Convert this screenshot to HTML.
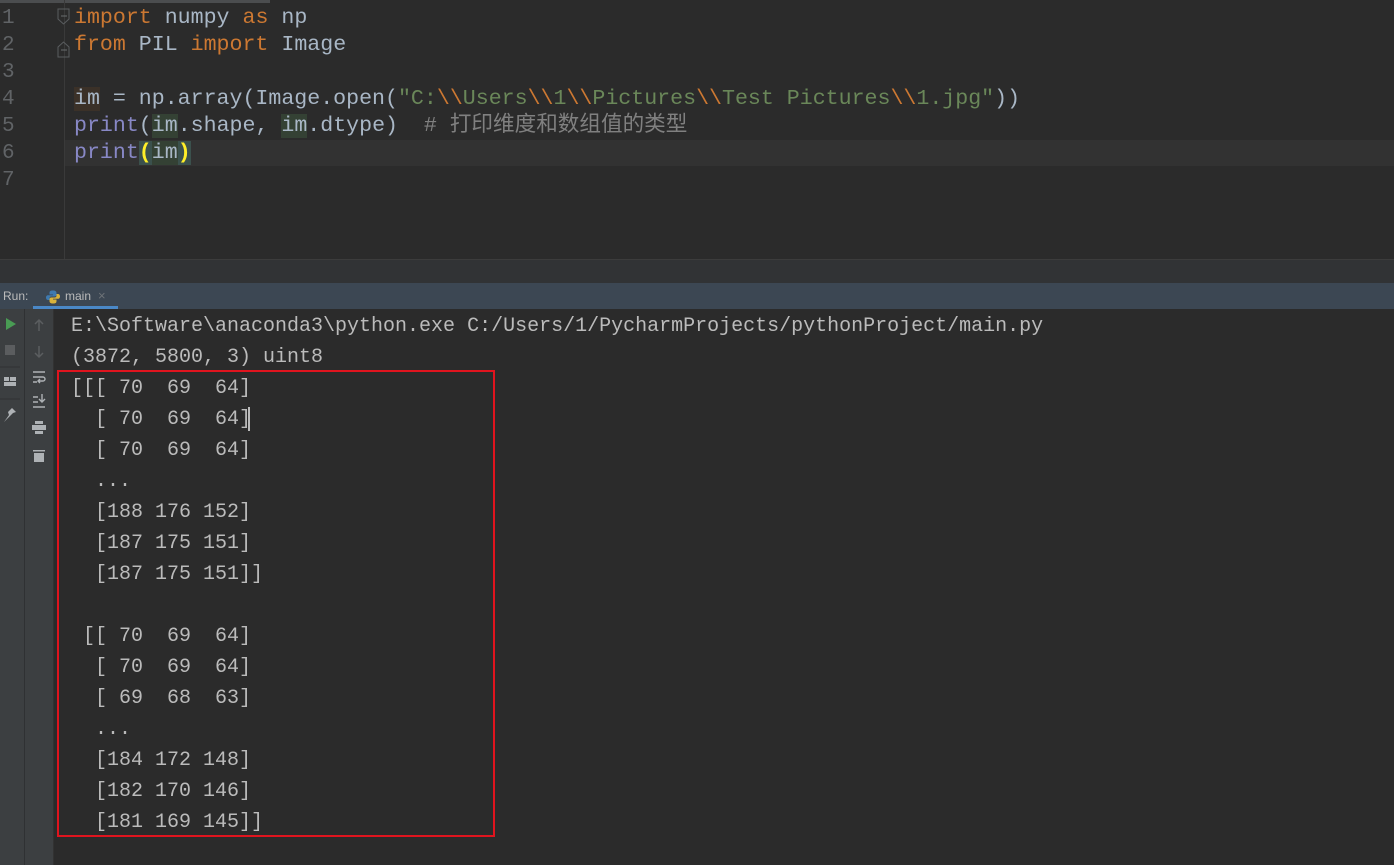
<!DOCTYPE html>
<html><head><meta charset="utf-8"><style>
body{margin:0;width:1394px;height:865px;background:#2b2b2b;overflow:hidden;position:relative;font-family:"Liberation Mono","Noto Sans CJK SC",monospace;}
.ed{position:absolute;left:0;top:0;width:1394px;height:259px;background:#2b2b2b;}
.ln{position:absolute;left:0;width:20px;text-align:left;color:#606366;font-size:21px;line-height:27px;padding-left:2px}
.code{position:absolute;left:74px;font-size:21.6px;line-height:27px;color:#a9b7c6;white-space:pre}
.k{color:#cc7832}.s{color:#6a8759}.p{color:#8888c6}.c{color:#808080}
.hl{background:#344134}
.con{position:absolute;left:71px;font-size:20px;line-height:31px;color:#bbbbbb;white-space:pre}
</style></head><body>
<div class="ed">
<div style="position:absolute;left:0;top:0;width:270px;height:3px;background:#4b4d4f"></div>
<div style="position:absolute;left:64px;top:0;width:1px;height:259px;background:#3a3a3a"></div>
<div style="position:absolute;left:65px;top:140px;width:1329px;height:26px;background:#323232"></div>
<div class="ln" style="top:5px">1</div><div class="ln" style="top:32px">2</div><div class="ln" style="top:59px">3</div><div class="ln" style="top:86px">4</div><div class="ln" style="top:113px">5</div><div class="ln" style="top:140px">6</div><div class="ln" style="top:167px">7</div>
<svg style="position:absolute;left:56px;top:8px" width="16" height="50"><path d="M2 1h11v10l-5.5 5l-5.5-5z" fill="none" stroke="#5a5d5f"/><path d="M5 8h6" stroke="#6a6d6f"/><path d="M2 49v-10l5.5-5l5.5 5v10z" fill="none" stroke="#5a5d5f"/><path d="M5 42h6" stroke="#6a6d6f"/></svg>
<div class="code" style="top:5px"><span class="k">import</span> numpy <span class="k">as</span> np</div>
<div class="code" style="top:32px"><span class="k">from</span> PIL <span class="k">import</span> Image</div>
<div class="code" style="top:86px"><span style="background:#3b3128">im</span> = np.array(Image.open(<span class="s">"C:<span class="k">\\</span>Users<span class="k">\\</span>1<span class="k">\\</span>Pictures<span class="k">\\</span>Test Pictures<span class="k">\\</span>1.jpg"</span>))</div>
<div class="code" style="top:113px"><span class="p">print</span>(<span class="hl">im</span>.shape, <span class="hl">im</span>.dtype)  <span class="c"># 打印维度和数组值的类型</span></div>
<div class="code" style="top:140px"><span class="p">print</span><span style="background:#3b514d;color:#ffef28;font-weight:bold">(</span><span class="hl">im</span><span style="background:#3b514d;color:#ffef28;font-weight:bold">)</span></div>
</div>
<div style="position:absolute;left:0;top:259px;width:1394px;height:1px;background:#3c3c3c"></div>
<div style="position:absolute;left:0;top:260px;width:1394px;height:23px;background:#313335"></div>
<div style="position:absolute;left:0;top:283px;width:1394px;height:26px;background:#3c4753"></div>
<div style="position:absolute;left:3px;top:289px;font-family:'Liberation Sans',sans-serif;font-size:12px;color:#bbbbbb">Run:</div>
<svg style="position:absolute;left:46px;top:290px" width="14" height="14"><path d="M7 0.5c-3 0-3.5 1-3.5 2.5v1.5h3.5v.7h-5C0.5 5.2 0 6.5 0 7.5s.5 2.5 2 2.5h1.5V8.3c0-1 .8-1.8 1.8-1.8h3.5c.9 0 1.7-.8 1.7-1.7V3C10.5 1.5 9.5.5 7 .5z" fill="#3e7ab0"/><path d="M7 13.5c3 0 3.5-1 3.5-2.5V9.5H7v-.7h5c1.5 0 2-1.3 2-2.3s-.5-2.5-2-2.5h-1.5v1.7c0 1-.8 1.8-1.8 1.8H5.2c-.9 0-1.7.8-1.7 1.7V11c0 1.5 1 2.5 3.5 2.5z" fill="#d9b33a"/></svg>
<div style="position:absolute;left:65px;top:289px;font-family:'Liberation Sans',sans-serif;font-size:12px;color:#bbbbbb">main</div>
<div style="position:absolute;left:98px;top:288px;font-family:'Liberation Sans',sans-serif;font-size:13px;color:#6e7378">×</div>
<div style="position:absolute;left:33px;top:306px;width:85px;height:3px;background:#4a88c7"></div>
<div style="position:absolute;left:0;top:309px;width:24px;height:556px;background:#3c3f41"></div>
<div style="position:absolute;left:24px;top:309px;width:1px;height:556px;background:#2f3133"></div>
<div style="position:absolute;left:25px;top:309px;width:28px;height:556px;background:#3c3f41"></div>
<div style="position:absolute;left:53px;top:309px;width:1px;height:556px;background:#323232"></div>
<svg style="position:absolute;left:0;top:309px" width="54" height="160">
<path d="M6 9l10 6l-10 6z" fill="#499c54"/>
<rect x="5" y="36" width="10" height="10" fill="#5b5d5f"/>
<path d="M0 58h20" stroke="#2f3133"/>
<rect x="4" y="68" width="5" height="4" fill="#aeb2b5"/><rect x="10" y="68" width="6" height="4" fill="#aeb2b5"/><rect x="4" y="73" width="12" height="4" fill="#aeb2b5"/>
<path d="M0 90h20" stroke="#2f3133"/>
<path d="M12 99l4 4l-3 1l-3 3l-6 6l5-7l-1-3z" fill="#aeb2b5"/>
<path d="M39 22v-11M35 15l4-4l4 4" stroke="#5b5e60" stroke-width="1.5" fill="none"/>
<path d="M39 37v11M35 44l4 4l4-4" stroke="#5b5e60" stroke-width="1.5" fill="none"/>
<path d="M33 63h12M33 68h10a2 2 0 0 1 0 4h-4M33 73h4M40 70l-2 2l2 2" stroke="#aeb2b5" stroke-width="1.4" fill="none"/>
<path d="M33 88h5M33 93h5M33 98h12M42 85v8M39 90l3 3l3-3" stroke="#aeb2b5" stroke-width="1.4" fill="none"/>
<rect x="35" y="112" width="8" height="3" fill="#aeb2b5"/><rect x="32" y="116" width="14" height="5" fill="#aeb2b5"/><rect x="35" y="122" width="8" height="3" fill="#aeb2b5"/>
<rect x="33" y="141" width="12" height="1.5" fill="#aeb2b5"/><rect x="34" y="144" width="10" height="9" fill="#aeb2b5"/>
</svg>
<div class="con" style="top:311px">E:\Software\anaconda3\python.exe C:/Users/1/PycharmProjects/pythonProject/main.py
(3872, 5800, 3) uint8
[[[ 70  69  64]
  [ 70  69  64]
  [ 70  69  64]
  ...
  [188 176 152]
  [187 175 151]
  [187 175 151]]

 [[ 70  69  64]
  [ 70  69  64]
  [ 69  68  63]
  ...
  [184 172 148]
  [182 170 146]
  [181 169 145]]</div>
<div style="position:absolute;left:248px;top:407px;width:2px;height:24px;background:#bbbbbb"></div>
<div style="position:absolute;left:57px;top:370px;width:434px;height:463px;border:2px solid #e0141e"></div>
</body></html>
